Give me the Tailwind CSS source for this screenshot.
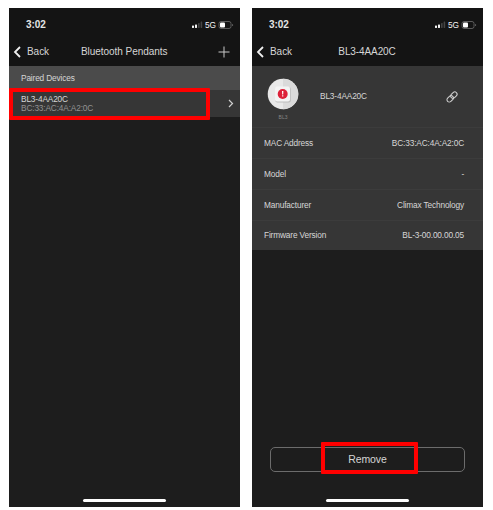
<!DOCTYPE html>
<html lang="en">
<head>
<meta charset="utf-8">
<title>Bluetooth Pendants</title>
<script src="https://cdn.jsdelivr.net/npm/@tailwindcss/browser@4"></script>
</head>
<body class="w-[493px] h-[510px] overflow-hidden bg-white font-['Liberation_Sans',Arial,sans-serif] text-[#d6d6d6]">
<svg class="hidden">
  <symbol id="status" viewBox="0 0 44 10">
    <g fill="#f2f2f2"><rect x="1" y="5.600" width="2" height="2.400" rx=".4"/><rect x="4" y="4.500" width="2" height="3.500" rx=".4"/></g>
    <g fill="#444"><rect x="7" y="3" width="1.600" height="5" rx=".4"/><rect x="9.600" y="1.600" width="1.600" height="6.400" rx=".4"/></g>
    <rect x="28" y="1.500" width="12" height="7" rx="2" fill="none" stroke="#6c6c6c" stroke-width=".8"/>
    <rect x="29" y="2.500" width="5" height="5" rx="1" fill="#fff"/>
    <path d="M41.200 3.900v2.200q1-.3 1-1.100t-1-1.100" fill="#777"/>
  </symbol>
  <symbol id="back" viewBox="0 0 8 12"><path d="M7 1 2 6l5 5" fill="none" stroke="#f0f0f0" stroke-width="1.800"/></symbol>
</svg>
<main class="flex gap-[12px] pl-[9px] pt-[8px]">
  <section class="relative w-[231px] h-[499px] bg-[#1d1d1d] flex flex-col">
    <header class="h-[58px] bg-[#141414] flex flex-col">
      <div class="h-[31px] pl-[17px] pr-[5px] flex items-center justify-between">
        <span class="text-[10px] tracking-[-0.05px] leading-none font-bold text-[#e4e4e4] pt-[3px]">3:02</span>
        <div class="relative w-[44px] h-[10px] mt-[2px]">
          <svg class="w-[44px] h-[10px]"><use href="#status"/></svg>
          <span class="absolute left-[14px] top-[1px] text-[8.3px] tracking-[-0.15px] leading-none text-[#f4f4f4]">5G</span>
        </div>
      </div>
      <div class="h-[26px] grid grid-cols-[66px_98px_1fr] items-center">
        <div class="flex items-center pl-[4px] gap-[6px]"><svg class="w-[8px] h-[12px]"><use href="#back"/></svg><span class="text-[10px] tracking-[-0.05px] leading-none">Back</span></div>
        <span class="pl-[6px] text-[10px] tracking-[-0.05px] leading-none whitespace-nowrap">Bluetooth Pendants</span>
        <svg class="w-[12px] h-[12px] justify-self-end mr-[10px]" viewBox="0 0 12 12"><path d="M6 .5v11M.5 6h11" stroke="#c8c8c8" stroke-width="1"/></svg>
      </div>
    </header>
    <div class="h-[24px] bg-[#4b4b4b] pl-[12px] flex items-center text-[8.3px] tracking-[-0.15px] leading-none">Paired Devices</div>
    <div class="h-[27px] bg-[#363636] pl-[12px] pr-[6px] flex items-center justify-between">
      <div class="text-[8.3px] tracking-[-0.15px] leading-[9px]"><p>BL3-4AA20C</p><p class="text-[#929292]">BC:33:AC:4A:A2:0C</p></div>
      <svg class="w-[6px] h-[9px]" viewBox="0 0 6 9"><path d="M1 1l3.500 3.500L1 8" fill="none" stroke="#d0d0d0" stroke-width="1.200"/></svg>
    </div>
    <div class="absolute left-0 top-[80px] w-[201px] h-[32px] border-[4px] border-[#ff0000] rounded-[1px]"></div>
    <div class="mt-auto mb-[5px] self-center w-[83px] h-[3px] rounded-full bg-white"></div>
  </section>

  <section class="relative w-[231px] h-[499px] bg-[#1d1d1d] flex flex-col">
    <header class="h-[58px] bg-[#141414] flex flex-col">
      <div class="h-[31px] pl-[17px] pr-[5px] flex items-center justify-between">
        <span class="text-[10px] tracking-[-0.05px] leading-none font-bold text-[#e4e4e4] pt-[3px]">3:02</span>
        <div class="relative w-[44px] h-[10px] mt-[2px]">
          <svg class="w-[44px] h-[10px]"><use href="#status"/></svg>
          <span class="absolute left-[14px] top-[1px] text-[8.3px] tracking-[-0.15px] leading-none text-[#f4f4f4]">5G</span>
        </div>
      </div>
      <div class="h-[26px] grid grid-cols-[66px_98px_1fr] items-center">
        <div class="flex items-center pl-[4px] gap-[6px]"><svg class="w-[8px] h-[12px]"><use href="#back"/></svg><span class="text-[10px] tracking-[-0.05px] leading-none">Back</span></div>
        <span class="text-[10px] tracking-[-0.1px] leading-none text-center whitespace-nowrap">BL3-4AA20C</span>
      </div>
    </header>
    <div class="h-[62px] bg-[#363636] border-b border-[#3c3c3c] grid grid-cols-[68px_1fr_38px] items-center">
      <div class="flex flex-col items-center pr-[6px] pt-[4px]">
        <svg class="w-[32px] h-[32px]" viewBox="0 0 32 32">
          <circle cx="16" cy="16" r="15.300" fill="#e8e8e8"/>
          <path d="M16 .7a15.300 15.300 0 0 1 0 30.600Z" fill="#dadada"/>
          <rect x="8.300" y="9" width="15.500" height="15.500" rx="2" fill="#bcbcbc"/>
          <rect x="8" y="8.500" width="15" height="15" rx="2" fill="#f3f3f3"/>
          <circle cx="15.700" cy="16" r="5" fill="#dd2038"/>
          <path d="M15 13h1.400l-.2 3.400h-1zM15.100 17.300h1.200v1.300h-1.200z" fill="#fff"/>
        </svg>
        <span class="mt-[5px] text-[5px] leading-none text-[#858585]">BL3</span>
      </div>
      <span class="text-[8.3px] tracking-[-0.15px] leading-none">BL3-4AA20C</span>
      <svg class="w-[14px] h-[14px]" viewBox="0 0 14 14" fill="none" stroke="#cfcfcf" stroke-width="1.050"><g transform="rotate(-45 7 7)"><rect x="6" y="4.700" width="7.200" height="4.600" rx="2.300"/><rect x=".8" y="4.700" width="7.200" height="4.600" rx="2.300"/></g></svg>
    </div>
    <dl class="text-[8.3px] tracking-[-0.15px] leading-none">
      <div class="h-[31px] bg-[#363636] border-b border-[#3c3c3c] pl-[12px] pr-[19px] flex items-center justify-between"><dt>MAC Address</dt><dd>BC:33:AC:4A:A2:0C</dd></div>
      <div class="h-[31px] bg-[#363636] border-b border-[#3c3c3c] pl-[12px] pr-[19px] flex items-center justify-between"><dt>Model</dt><dd>-</dd></div>
      <div class="h-[31px] bg-[#363636] border-b border-[#3c3c3c] pl-[12px] pr-[19px] flex items-center justify-between"><dt>Manufacturer</dt><dd>Climax Technology</dd></div>
      <div class="h-[29px] bg-[#363636] pl-[12px] pr-[19px] flex items-center justify-between"><dt>Firmware Version</dt><dd>BL-3-00.00.00.05</dd></div>
    </dl>
    <button class="mt-auto ml-[18px] w-[195px] h-[25px] border border-[#6c6c6c] rounded-[5px] text-[10.5px] tracking-[-0.1px] leading-none pb-[1px]">Remove</button>
    <div class="absolute left-[69px] top-[434px] w-[97px] h-[32px] border-[4px] border-[#ff0000] rounded-[1px]"></div>
    <div class="mt-[27px] mb-[5px] ml-[74px] w-[83px] h-[3px] rounded-full bg-white"></div>
  </section>
</main>
</body>
</html>
